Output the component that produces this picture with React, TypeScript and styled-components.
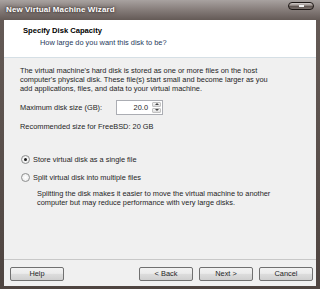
import styled, { createGlobalStyle } from "styled-components";

const GlobalStyle = createGlobalStyle`
  html, body {
    margin: 0;
    padding: 0;
    background: #3a302c;
  }
  * {
    box-sizing: border-box;
  }
`;

const Window = styled.div`
  width: 320px;
  height: 289px;
  display: flex;
  flex-direction: column;
  background: linear-gradient(180deg, #a8a2a0 0px, #857c79 10px, #645a56 20px, #4e4440 100%);
  font-family: "Liberation Sans", Arial, sans-serif;
  color: #1e1e1e;
  overflow: hidden;
`;

const TitleBar = styled.div`
  height: 20px;
  flex: none;
  display: flex;
  align-items: center;
  justify-content: space-between;
  padding: 0 6px 2px 6px;
`;

const Title = styled.span`
  font-size: 8px;
  font-weight: bold;
  color: #ffffff;
  letter-spacing: 0.1px;
  text-shadow: 0 0 2px rgba(40, 30, 28, 0.9), 0 0 4px rgba(40, 30, 28, 0.6);
`;

const CloseButton = styled.div`
  width: 26px;
  height: 8px;
  margin-top: -6px;
  border-radius: 4px;
  border: 1px solid #1c1614;
  background: linear-gradient(180deg, #d6d0ce 0%, #8a807c 45%, #5e5450 55%, #7a706c 100%);
  display: flex;
  align-items: center;
  justify-content: center;

  &::after {
    content: "";
    width: 5px;
    height: 2px;
    background: #f4f4f4;
  }
`;

const Client = styled.div`
  flex: 1;
  margin: 0 4px 3px 4px;
  display: flex;
  flex-direction: column;
  background: #f0f0f0;
`;

const Header = styled.div`
  height: 38px;
  flex: none;
  background: #ffffff;
  border-bottom: 1px solid #d5dfe5;
  padding: 6px 0 0 19px;
`;

const HeaderTitle = styled.div`
  font-size: 7.6px;
  font-weight: bold;
  line-height: 10px;
  color: #000000;
`;

const HeaderSub = styled.div`
  font-size: 7.4px;
  line-height: 10px;
  margin: 2px 0 0 17px;
  color: #1e395b;
`;

const Body = styled.div`
  flex: 1;
  padding: 8px 0 0 16px;
  font-size: 7.4px;
  line-height: 9.2px;
`;

const Paragraph = styled.p`
  margin: 0;
  white-space: nowrap;
`;

const SizeRow = styled.div`
  display: flex;
  align-items: center;
  margin-top: 6px;
  height: 15px;
`;

const SizeLabel = styled.span`
  width: 96px;
`;

const Spinner = styled.div`
  display: flex;
  height: 15px;
  width: 47px;
  border: 1px solid #abadb3;
  background: #ffffff;
`;

const SpinValue = styled.div`
  flex: 1;
  text-align: right;
  padding-right: 4px;
  line-height: 13px;
`;

const SpinArrows = styled.div`
  width: 10px;
  display: flex;
  flex-direction: column;
  gap: 1px;
  padding: 1px 1px 1px 0;
`;

const SpinArrow = styled.div<{ $down?: boolean }>`
  flex: 1;
  border: 1px solid #c2c2c2;
  border-radius: 1px;
  background: linear-gradient(180deg, #f6f6f6, #dedede);
  display: flex;
  align-items: center;
  justify-content: center;

  &::after {
    content: "";
    width: 0;
    height: 0;
    border-left: 2px solid transparent;
    border-right: 2px solid transparent;
    ${({ $down }) =>
      $down ? "border-top: 2px solid #444;" : "border-bottom: 2px solid #444;"}
  }
`;

const Recommended = styled.div`
  margin-top: 7px;
`;

const RadioGroup = styled.div`
  margin-top: 24px;
  display: flex;
  flex-direction: column;
  gap: 9px;
`;

const RadioRow = styled.div`
  display: flex;
  align-items: center;
  gap: 3px;
  padding-left: 1px;
`;

const RadioCircle = styled.span<{ $checked?: boolean }>`
  width: 9px;
  height: 9px;
  border-radius: 50%;
  border: 1px solid #8e8f8f;
  background: radial-gradient(circle, #ffffff 0%, #e6e6e6 100%);
  display: flex;
  align-items: center;
  justify-content: center;

  &::after {
    content: "";
    width: 3px;
    height: 3px;
    border-radius: 50%;
    background: ${({ $checked }) => ($checked ? "#1a1a1a" : "transparent")};
  }
`;

const Note = styled.p`
  margin: 8px 0 0 17px;
  line-height: 8.6px;
  white-space: nowrap;
`;

const Footer = styled.div`
  height: 27px;
  flex: none;
  border-top: 1px solid #c8c8c8;
  display: flex;
  align-items: center;
  padding: 1px 3px 0 6px;
  gap: 6px;
`;

const Spacer = styled.div`
  flex: 1;
`;

const Button = styled.button`
  width: 54px;
  height: 14px;
  padding: 0;
  border: 1px solid #707070;
  border-radius: 2px;
  background: linear-gradient(180deg, #f2f2f2 0%, #ebebeb 45%, #dddddd 50%, #cfcfcf 100%);
  font-family: "Liberation Sans", Arial, sans-serif;
  font-size: 7.4px;
  color: #1e1e1e;
  line-height: 12px;
`;

export default function App() {
  return (
    <>
      <GlobalStyle />
      <Window>
        <TitleBar>
          <Title>New Virtual Machine Wizard</Title>
          <CloseButton />
        </TitleBar>
        <Client>
          <Header>
            <HeaderTitle>Specify Disk Capacity</HeaderTitle>
            <HeaderSub>How large do you want this disk to be?</HeaderSub>
          </Header>
          <Body>
            <Paragraph>
              The virtual machine's hard disk is stored as one or more files on the host
              <br />
              computer's physical disk. These file(s) start small and become larger as you
              <br />
              add applications, files, and data to your virtual machine.
            </Paragraph>
            <SizeRow>
              <SizeLabel>Maximum disk size (GB):</SizeLabel>
              <Spinner>
                <SpinValue>20.0</SpinValue>
                <SpinArrows>
                  <SpinArrow />
                  <SpinArrow $down />
                </SpinArrows>
              </Spinner>
            </SizeRow>
            <Recommended>Recommended size for FreeBSD: 20 GB</Recommended>
            <RadioGroup>
              <RadioRow>
                <RadioCircle $checked />
                <span>Store virtual disk as a single file</span>
              </RadioRow>
              <RadioRow>
                <RadioCircle />
                <span>Split virtual disk into multiple files</span>
              </RadioRow>
            </RadioGroup>
            <Note>
              Splitting the disk makes it easier to move the virtual machine to another
              <br />
              computer but may reduce performance with very large disks.
            </Note>
          </Body>
          <Footer>
            <Button>Help</Button>
            <Spacer />
            <Button>&lt; Back</Button>
            <Button>Next &gt;</Button>
            <Button>Cancel</Button>
          </Footer>
        </Client>
      </Window>
    </>
  );
}
